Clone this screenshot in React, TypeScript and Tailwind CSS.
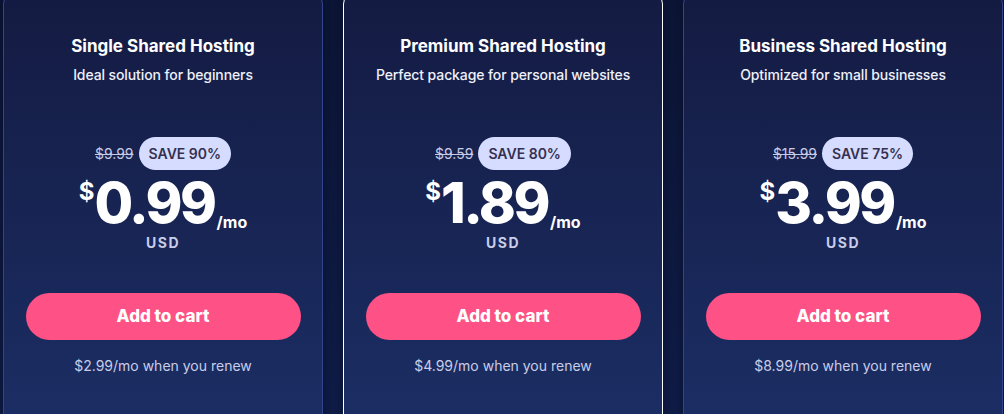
const plans = [
  {
    title: "Single Shared Hosting",
    sub: "Ideal solution for beginners",
    old: "$9.99",
    save: "SAVE 90%",
    price: "0.99",
    renew: "$2.99/mo when you renew",
    featured: false,
  },
  {
    title: "Premium Shared Hosting",
    sub: "Perfect package for personal websites",
    old: "$9.59",
    save: "SAVE 80%",
    price: "1.89",
    renew: "$4.99/mo when you renew",
    featured: true,
  },
  {
    title: "Business Shared Hosting",
    sub: "Optimized for small businesses",
    old: "$15.99",
    save: "SAVE 75%",
    price: "3.99",
    renew: "$8.99/mo when you renew",
    featured: false,
  },
];

const PlanCard = ({ plan }: { plan: (typeof plans)[number] }) => {
  return (
    <div
      className={`w-[320px] shrink-0 mt-[-8px] h-[440px] rounded-xl border shadow-[0_0_14px_rgba(5,10,35,0.8)] bg-gradient-to-b from-[#141b42] to-[#1b2e65] flex flex-col items-center pt-[41px] ${
        plan.featured ? "border-white" : "border-[#34458f]"
      }`}
    >
      <h2 className="text-[17px] leading-[24px] font-bold text-white">{plan.title}</h2>
      <p className="mt-[7px] text-[14px] leading-[20px] font-medium tracking-[-0.1px] text-[#eef0fa]">{plan.sub}</p>

      <div className="mt-[52px] flex items-center gap-[5px] h-[33px]">
        <span className="text-[14px] text-[#c6cbe6] line-through">{plan.old}</span>
        <span className="h-[33px] px-[10px] rounded-full bg-[#d5dcff] text-[#35304f] text-[14px] font-semibold flex items-center">
          {plan.save}
        </span>
      </div>

      <div className="mt-[10px] flex items-start">
        <span className="text-[24px] leading-none font-bold text-white">$</span>
        <span className="text-[56px] leading-[46px] font-extrabold tracking-[-2.5px] text-white">{plan.price}</span>
        <span className="mt-[34px] ml-[2px] text-[16px] leading-none font-bold text-white">/mo</span>
      </div>
      <p className="mt-[7px] text-[14px] leading-[12px] font-bold tracking-[1.5px] text-[#c8cde8]">USD</p>

      <button className="mt-[44px] w-[275px] h-[47px] rounded-full bg-[#fe5185] text-white text-[17px] font-extrabold">
        Add to cart
      </button>
      <p className="mt-[16px] text-[14px] leading-[20px] text-[#c8cde8]">{plan.renew}</p>
    </div>
  );
};

export default function App() {
  return (
    <div
      className="h-[414px] w-full overflow-hidden bg-gradient-to-b from-[#0d1738] to-[#111f4c] flex gap-[20px] pl-[3px]"
      style={{ fontFamily: "Inter, 'Noto Sans', sans-serif" }}
    >
      {plans.map((p) => (
        <PlanCard key={p.title} plan={p} />
      ))}
    </div>
  );
}
